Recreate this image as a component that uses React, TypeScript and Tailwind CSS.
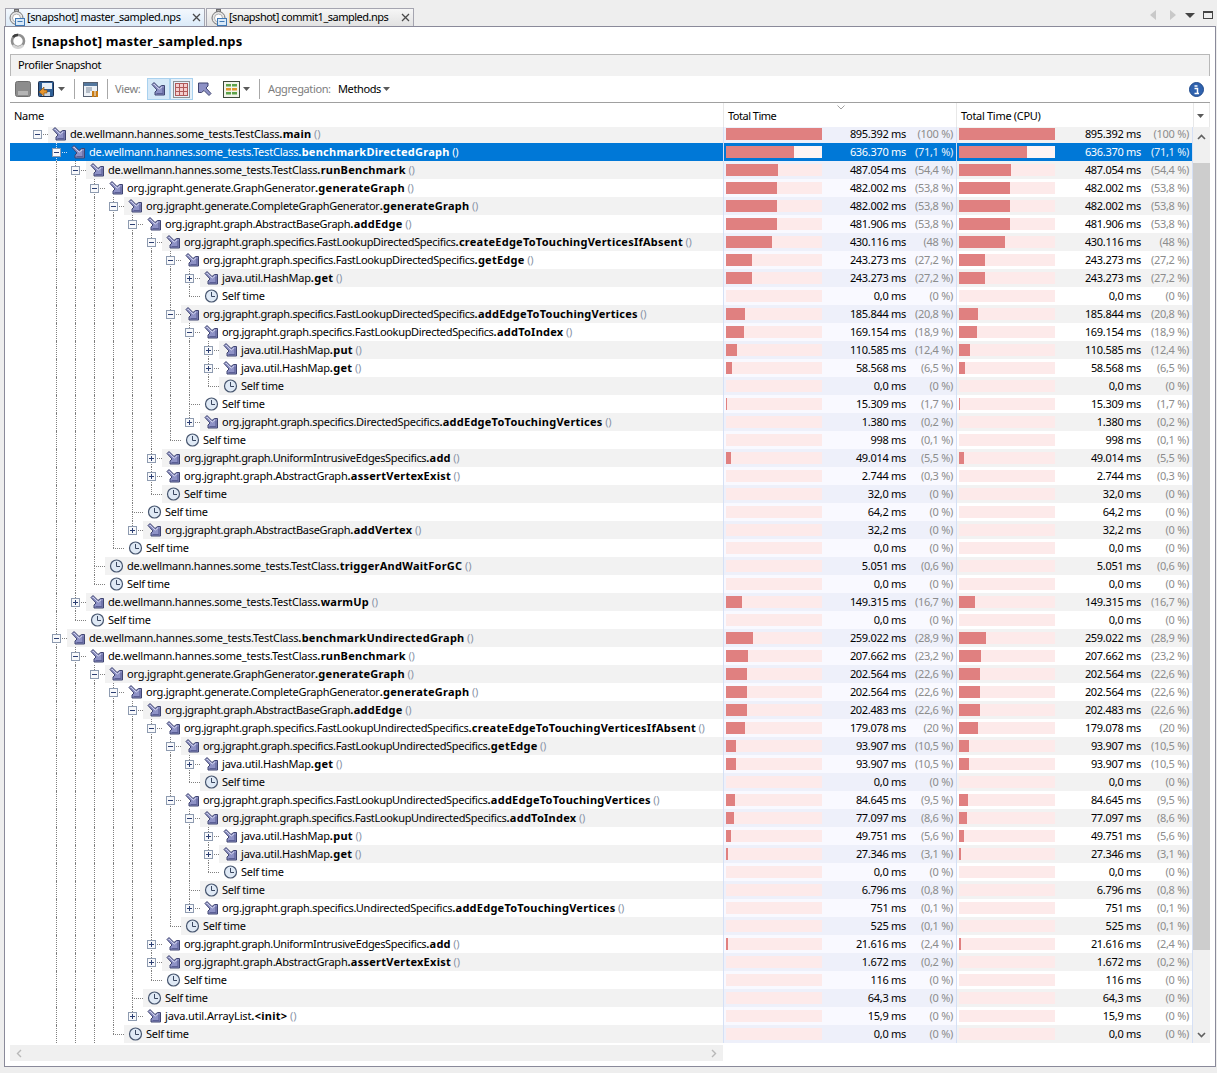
import React from 'react';

type Row = {
  depth: number;
  pkg: string;
  method?: string;
  time: string;
  pct: string;
  value: number;
  toggle?: '+' | '-';
  clock?: boolean;
  selected?: boolean;
};

const TC = 'de.wellmann.hannes.some_tests.TestClass';
const FD = 'org.jgrapht.graph.specifics.FastLookupDirectedSpecifics';
const FU = 'org.jgrapht.graph.specifics.FastLookupUndirectedSpecifics';
const GG = 'org.jgrapht.generate.GraphGenerator';
const CG = 'org.jgrapht.generate.CompleteGraphGenerator';
const AB = 'org.jgrapht.graph.AbstractBaseGraph';
const AG = 'org.jgrapht.graph.AbstractGraph';
const UI = 'org.jgrapht.graph.UniformIntrusiveEdgesSpecifics';
const HM = 'java.util.HashMap';
const AL = 'java.util.ArrayList';

// the reference font runs wider or narrower depending on the letters, so spacing goes per class
const tracking: Record<string, string> = {
  [TC]: 'tracking-[-0.22px]',
  [FD]: 'tracking-[-0.32px]',
  [FU]: 'tracking-[-0.32px]',
  [GG]: 'tracking-[-0.21px]',
  [AG]: 'tracking-[-0.21px]',
  [UI]: 'tracking-[-0.35px]',
  [HM]: 'tracking-[-0.21px]',
  [AL]: 'tracking-[-0.12px]',
};

const m = (depth: number, pkg: string, method: string, time: string, pct: string, toggle?: '+' | '-'): Row => ({
  depth,
  pkg,
  method,
  time: `${time} ms`,
  pct,
  value: parseFloat(pct.replace(',', '.')),
  toggle,
});

const self = (depth: number, time: string, pct = '0'): Row => ({
  depth,
  pkg: 'Self time',
  time: `${time} ms`,
  pct,
  value: parseFloat(pct.replace(',', '.')),
  clock: true,
});

const rows: Row[] = [
  m(0, TC, 'main', '895.392', '100', '-'),
  { ...m(1, TC, 'benchmarkDirectedGraph', '636.370', '71,1', '-'), selected: true },
  m(2, TC, 'runBenchmark', '487.054', '54,4', '-'),
  m(3, GG, 'generateGraph', '482.002', '53,8', '-'),
  m(4, CG, 'generateGraph', '482.002', '53,8', '-'),
  m(5, AB, 'addEdge', '481.906', '53,8', '-'),
  m(6, FD, 'createEdgeToTouchingVerticesIfAbsent', '430.116', '48', '-'),
  m(7, FD, 'getEdge', '243.273', '27,2', '-'),
  m(8, HM, 'get', '243.273', '27,2', '+'),
  self(8, '0,0'),
  m(7, FD, 'addEdgeToTouchingVertices', '185.844', '20,8', '-'),
  m(8, FD, 'addToIndex', '169.154', '18,9', '-'),
  m(9, HM, 'put', '110.585', '12,4', '+'),
  m(9, HM, 'get', '58.568', '6,5', '+'),
  self(9, '0,0'),
  self(8, '15.309', '1,7'),
  m(8, 'org.jgrapht.graph.specifics.DirectedSpecifics', 'addEdgeToTouchingVertices', '1.380', '0,2', '+'),
  self(7, '998', '0,1'),
  m(6, UI, 'add', '49.014', '5,5', '+'),
  m(6, AG, 'assertVertexExist', '2.744', '0,3', '+'),
  self(6, '32,0'),
  self(5, '64,2'),
  m(5, AB, 'addVertex', '32,2', '0', '+'),
  self(4, '0,0'),
  { ...m(3, TC, 'triggerAndWaitForGC', '5.051', '0,6'), clock: true },
  self(3, '0,0'),
  m(2, TC, 'warmUp', '149.315', '16,7', '+'),
  self(2, '0,0'),
  m(1, TC, 'benchmarkUndirectedGraph', '259.022', '28,9', '-'),
  m(2, TC, 'runBenchmark', '207.662', '23,2', '-'),
  m(3, GG, 'generateGraph', '202.564', '22,6', '-'),
  m(4, CG, 'generateGraph', '202.564', '22,6', '-'),
  m(5, AB, 'addEdge', '202.483', '22,6', '-'),
  m(6, FU, 'createEdgeToTouchingVerticesIfAbsent', '179.078', '20', '-'),
  m(7, FU, 'getEdge', '93.907', '10,5', '-'),
  m(8, HM, 'get', '93.907', '10,5', '+'),
  self(8, '0,0'),
  m(7, FU, 'addEdgeToTouchingVertices', '84.645', '9,5', '-'),
  m(8, FU, 'addToIndex', '77.097', '8,6', '-'),
  m(9, HM, 'put', '49.751', '5,6', '+'),
  m(9, HM, 'get', '27.346', '3,1', '+'),
  self(9, '0,0'),
  self(8, '6.796', '0,8'),
  m(8, 'org.jgrapht.graph.specifics.UndirectedSpecifics', 'addEdgeToTouchingVertices', '751', '0,1', '+'),
  self(7, '525', '0,1'),
  m(6, UI, 'add', '21.616', '2,4', '+'),
  m(6, AG, 'assertVertexExist', '1.672', '0,2', '+'),
  self(6, '116'),
  self(5, '64,3'),
  m(5, AL, '<init>', '15,9', '0', '+'),
  self(4, '0,0'),
];

// siblings that are scrolled out of view below the last row
const offscreen = [3, 2, 1];
const depths = [...rows.map((r) => r.depth), ...offscreen];

const hasLater = (i: number, level: number) => {
  for (let j = i + 1; j < depths.length; j++) {
    if (depths[j] < level) return false;
    if (depths[j] === level) return true;
  }
  return false;
};

const ARROW = 'M1 3.5 L3 1.5 L8 6.5 L10.5 4.5 L13.5 4.5 L13.5 14 L4 14 L4 11 L6 9 Z';

const MethodIcon = () => (
  <svg width="16" height="16" viewBox="0 0 16 16" className="shrink-0">
    <path d={ARROW} fill="#8e92c6" stroke="#3f4470" strokeWidth="1" strokeLinejoin="round" />
    <path d="M2.5 3.5 L3 3 L8.2 8.2 L11 6" fill="none" stroke="#cfd1ea" strokeWidth="1" />
    <path d="M5.5 12.5 H12 V6.5" fill="none" stroke="#5b5f96" strokeWidth="1.1" />
  </svg>
);

const ClockIcon = () => (
  <svg width="16" height="16" viewBox="0 0 16 16" className="shrink-0">
    <circle cx="7.5" cy="8" r="6" fill="#dfe9f5" stroke="#47566f" strokeWidth="1.2" />
    <path d="M7.5 4 V8.5 H11" fill="none" stroke="#3a4760" strokeWidth="1" />
  </svg>
);

const Handle = ({ sign }: { sign: '+' | '-' }) => (
  <svg width="9" height="9" viewBox="0 0 9 9" className="absolute -left-[4px] top-[5px]">
    <rect x="0.5" y="0.5" width="8" height="8" fill="#f8f9fb" stroke="#8e9bb0" />
    <path d={sign === '+' ? 'M2 4.5 H7 M4.5 2 V7' : 'M2 4.5 H7'} stroke="#2c3f73" />
  </svg>
);

const Bar = ({ value, selected }: { value: number; selected?: boolean }) => (
  <div className={`h-[12px] w-[96px] shrink-0 ${selected ? 'bg-[#fdf4f4]' : 'bg-[#fdeaea]'}`}>
    <div className="h-full bg-[#e08080]" style={{ width: `${Math.floor((value / 100) * 96)}px` }} />
  </div>
);

const TreeCell = ({ row, index }: { row: Row; index: number }) => {
  const dot = row.selected ? 'border-[#cfe3f7]' : 'border-[#808080]';
  return (
    <div className="flex h-full min-w-0 pl-[27px]">
      {Array.from({ length: row.depth }, (_, level) => (
        <div
          key={level}
          className={`h-full w-[19px] shrink-0 ${hasLater(index, level) ? `border-l border-dotted ${dot}` : ''}`}
        />
      ))}
      <div className="relative flex h-full w-[11px] shrink-0 flex-col">
        <div className={`h-[9px] ${row.depth > 0 ? `border-l border-dotted ${dot}` : ''}`} />
        <div
          className={`h-[9px] border-t border-dotted ${dot} ${
            hasLater(index, row.depth) ? 'border-l' : ''
          }`}
        />
        {row.toggle && <Handle sign={row.toggle} />}
      </div>
      <div
        className={`flex h-full flex-1 items-center gap-[2px] pl-[4px] ${
          !row.selected && index % 2 === 0 ? 'bg-[#f2f2f2]' : ''
        }`}
      >
        {row.clock ? <ClockIcon /> : <MethodIcon />}
        <span className={`whitespace-pre ${tracking[row.pkg] ?? 'tracking-[-0.27px]'}`}>
          {row.pkg}
          {row.method && <span className="font-bold tracking-[0.25px]">.{row.method}</span>}
          {row.method && <span className={row.selected ? 'text-white' : 'text-[#8a94a8]'}> ()</span>}
        </span>
      </div>
    </div>
  );
};

const TimeCell = ({ row, cpu, stripe }: { row: Row; cpu?: boolean; stripe: boolean }) => {
  let bg = stripe ? 'bg-[#eef0fa]' : 'bg-[#f9f9ff]';
  if (cpu) bg = stripe ? 'bg-[#f2f2f2]' : 'bg-white';
  if (row.selected) bg = 'bg-[#0078d7]';
  return (
    <div
      className={`flex h-full items-center border-l border-[#d5e0f5] pl-[2px] pr-[3px] ${bg} ${
        cpu ? 'border-r' : ''
      }`}
    >
      <Bar value={row.value} selected={row.selected} />
      <span className="flex-1 text-right">{row.time}</span>
      <span
        className={`text-right ${cpu ? 'w-[48px]' : 'w-[47px]'} ${
          row.selected ? 'text-[#e6f0fa]' : 'text-[#8c8c8c]'
        }`}
      >
        ({row.pct} %)
      </span>
    </div>
  );
};

const Caret = () => (
  <svg width="7" height="4" viewBox="0 0 7 4" className="shrink-0">
    <path d="M0 0 H7 L3.5 4 Z" fill="#5a5a5a" />
  </svg>
);

const Separator = () => <div className="h-[20px] w-px shrink-0 bg-[#a8a8a8]" />;

const TabIcon = () => (
  <svg width="16" height="18" viewBox="0 0 16 18" className="shrink-0">
    <rect x="5.5" y="0.5" width="4" height="2" fill="#a9a9a9" stroke="#6e6e6e" />
    <circle cx="7.5" cy="9" r="6.5" fill="#e6e6e6" stroke="#777" />
    <circle cx="7.5" cy="9" r="4" fill="#fff" stroke="#b0b0b0" />
    <rect x="6.5" y="9.5" width="9" height="7" fill="#d9e9f8" stroke="#3f78b5" />
    <path d="M8.5 12.5 H13.5" stroke="#3f78b5" />
  </svg>
);

const Tab = ({ label, active, box }: { label: string; active?: boolean; box: string }) => (
  <div
    className={`flex h-[18px] items-center border border-b-0 border-[#a5a5b0] ${box} ${
      active ? 'bg-gradient-to-b from-[#f3f8fd] to-[#dcebf9]' : 'bg-gradient-to-b from-[#f6f6f6] to-[#e2e2e2]'
    }`}
  >
    <TabIcon />
    <span
      className={`ml-[2px] -mt-[2px] flex-1 whitespace-pre ${active ? 'tracking-[-0.4px]' : 'tracking-[-0.5px]'}`}
    >
      {label}
    </span>
    <svg width="9" height="9" viewBox="0 0 9 9" className="mr-[3px] shrink-0">
      <path d="M1 1 L8 8 M8 1 L1 8" stroke="#4a4a4a" strokeWidth="1.3" />
    </svg>
  </div>
);

const TitleSpinner = () => (
  <svg width="16" height="16" viewBox="0 0 16 16" className="shrink-0">
    <circle cx="8" cy="8" r="6" fill="none" stroke="#8f8f8f" strokeWidth="2.6" />
    <path d="M3 12 A6 6 0 0 0 13 12" fill="none" stroke="#d4d4d4" strokeWidth="2.6" />
    <path d="M3 4 A6 6 0 0 1 8 2" fill="none" stroke="#3e3e3e" strokeWidth="2.6" />
  </svg>
);

export default function App() {
  return (
    <div className="flex h-[1073px] w-[1217px] flex-col overflow-hidden bg-[#eeeeee] font-['Noto_Sans',sans-serif] text-[11px] leading-[18px] tracking-[-0.3px] text-black">
      {/* tab strip */}
      <div className="flex h-[26px] shrink-0 items-end pl-[5px]">
        <Tab label="[snapshot] master_sampled.nps" active box="w-[200px] pl-[3px]" />
        <Tab label="[snapshot] commit1_sampled.nps" box="ml-[1px] w-[208px] pl-[4px]" />
        <div className="ml-auto mr-[4px] flex items-center self-start pt-[10px]">
          <svg width="7" height="10" viewBox="0 0 7 10" className="mr-[12px]">
            <path d="M6 0 V10 L0 5 Z" fill="#c8c8c8" />
          </svg>
          <svg width="7" height="10" viewBox="0 0 7 10" className="mr-[9px]">
            <path d="M1 0 V10 L7 5 Z" fill="#c8c8c8" />
          </svg>
          <svg width="10" height="5" viewBox="0 0 10 5" className="mr-[8px]">
            <path d="M0 0 H10 L5 5 Z" fill="#444" />
          </svg>
          <div className="h-[8px] w-[10px] border border-t-2 border-[#444]" />
        </div>
      </div>

      {/* main panel */}
      <div className="mb-[6px] ml-[4px] mr-[1px] flex min-h-0 flex-1 flex-col border border-[#8a8a9a] bg-white px-[5px]">
        <div className="flex h-[27px] shrink-0 items-center gap-[6px]">
          <TitleSpinner />
          <span className="text-[13px] font-bold tracking-[0.18px]">[snapshot] master_sampled.nps</span>
        </div>

        <div className="flex h-[22px] shrink-0 items-center border border-b-0 border-[#b8b8b8] bg-[#f2f2f2] pb-[2px] pl-[7px] tracking-[-0.35px]">
          Profiler Snapshot
        </div>

        {/* toolbar */}
        <div className="flex h-[27px] shrink-0 items-center border-b border-[#a0a0a0] pl-[5px] pr-[6px]">
          <svg width="16" height="16" viewBox="0 0 16 16" className="shrink-0">
            <rect x="0.5" y="0.5" width="15" height="15" rx="2" fill="#8d8d8d" stroke="#6f6f6f" />
            <rect x="3" y="10" width="10" height="4" fill="#b5b5b5" />
          </svg>
          <svg width="16" height="16" viewBox="0 0 16 16" className="ml-[7px] shrink-0">
            <rect x="0.5" y="0.5" width="15" height="15" rx="1" fill="#2f5f96" stroke="#1c2f4e" />
            <rect x="4" y="2" width="10" height="6" fill="#e6eef7" />
            <rect x="4" y="11" width="8" height="4" fill="#c9d3df" />
            <path d="M1 11 L6 6 V9 H9 V12 H6 V15 Z" fill="#e8952c" stroke="#7a4a10" strokeWidth="0.6" />
          </svg>
          <div className="ml-[4px]">
            <Caret />
          </div>
          <div className="ml-[9px]">
            <Separator />
          </div>
          <svg width="16" height="17" viewBox="0 0 16 17" className="ml-[8px] shrink-0">
            <rect x="0.5" y="1.5" width="14" height="14" fill="#eef2f7" stroke="#566070" />
            <rect x="1" y="2" width="13" height="3" fill="#54789f" />
            <path d="M3 7 H9 M3 9 H9 M3 11 H7" stroke="#7a8798" />
            <rect x="9" y="10" width="2.5" height="6" fill="#c97c14" />
            <rect x="12.5" y="10" width="2.5" height="6" fill="#c97c14" />
          </svg>
          <div className="ml-[8px]">
            <Separator />
          </div>
          <span className="ml-[7px] w-[32px] shrink-0 text-[#7d7d7d]">View:</span>
          <div className="flex h-[22px] w-[23px] items-center justify-center border border-[#a9d1ee] bg-[#d6e9f8]">
            <MethodIcon />
          </div>
          <div className="flex h-[22px] w-[23px] items-center justify-center border border-[#a9d1ee] bg-[#e6f1fa]">
            <svg width="17" height="17" viewBox="0 0 17 17">
              <rect x="0.5" y="0.5" width="16" height="16" fill="none" stroke="#333" strokeDasharray="1 1" />
              <rect x="2.5" y="2.5" width="12" height="12" fill="#f4cfcf" stroke="#b05a5a" />
              <path d="M2.5 6.5 H14.5 M2.5 10.5 H14.5 M6.5 2.5 V14.5 M10.5 2.5 V14.5" stroke="#b05a5a" />
            </svg>
          </div>
          <svg width="16" height="16" viewBox="0 0 16 16" className="ml-[3px] shrink-0 rotate-180">
            <path d={ARROW} fill="#8e92c6" stroke="#3f4470" strokeLinejoin="round" />
          </svg>
          <svg width="17" height="17" viewBox="0 0 17 17" className="ml-[11px] shrink-0">
            <rect x="0.5" y="0.5" width="16" height="16" fill="#f2f5ea" stroke="#3e4a3a" />
            <rect x="3" y="3" width="11" height="2.5" fill="#5da34a" />
            <rect x="3" y="7" width="11" height="2.5" fill="#e0962c" />
            <rect x="3" y="11" width="11" height="2.5" fill="#5da34a" />
            <path d="M8.5 2 V15" stroke="#f2f5ea" />
          </svg>
          <div className="ml-[3px]">
            <Caret />
          </div>
          <div className="ml-[9px]">
            <Separator />
          </div>
          <span className="ml-[8px] w-[70px] shrink-0 text-[#7d7d7d] tracking-[-0.38px]">Aggregation:</span>
          <span className="w-[45px] shrink-0 tracking-[-0.38px]">Methods</span>
          <Caret />
          <svg width="15" height="15" viewBox="0 0 15 15" className="ml-auto shrink-0">
            <circle cx="7.5" cy="7.5" r="7" fill="#2f62ae" stroke="#1f4a8c" />
            <path d="M5.5 4 H8.5 M5.5 6.5 H8.5 V11.5 M5.5 11.5 H10" stroke="#fff" strokeWidth="1.5" fill="none" />
          </svg>
        </div>

        {/* column headers */}
        <div className="grid h-[24px] shrink-0 grid-cols-[713px_233px_237px_17px] bg-white">
          <div className="flex items-center pl-[4px] pt-[2px]">Name</div>
          <div className="relative flex items-center border-l border-[#e8e8e8] pl-[4px] pt-[2px] tracking-[-0.5px]">
            Total Time
            <svg width="8" height="5" viewBox="0 0 8 5" className="absolute left-[113px] top-[2px]">
              <path d="M0.5 0.5 L4 4 L7.5 0.5" fill="none" stroke="#a0a0a0" />
            </svg>
          </div>
          <div className="flex items-center border-l border-[#e8e8e8] pl-[4px] pt-[2px]">Total Time (CPU)</div>
          <div className="flex items-center justify-center border-x border-[#e8e8e8] pr-[2px] pt-[2px]">
            <Caret />
          </div>
        </div>

        {/* table body */}
        <div className="flex h-[916px] shrink-0 overflow-hidden">
          <div className="w-[1183px] shrink-0">
            <div className="-mt-[2px]">
              {rows.map((row, i) => (
                <div
                  key={i}
                  className={`grid h-[18px] grid-cols-[713px_233px_237px] ${
                    row.selected ? 'bg-[#0078d7] text-white' : ''
                  }`}
                >
                  <TreeCell row={row} index={i} />
                  <TimeCell row={row} stripe={i % 2 === 0} />
                  <TimeCell row={row} cpu stripe={i % 2 === 0} />
                </div>
              ))}
            </div>
          </div>
          <div className="flex w-[17px] shrink-0 flex-col bg-[#f0f0f0]">
            <div className="flex h-[36px] shrink-0 items-start justify-center pt-[7px]">
              <svg width="9" height="6" viewBox="0 0 9 6">
                <path d="M1 5 L4.5 1.5 L8 5" fill="none" stroke="#606060" strokeWidth="1.6" />
              </svg>
            </div>
            <div className="h-[787px] shrink-0 bg-[#cdcdcd]" />
            <div className="flex flex-1 items-end justify-center pb-[5px]">
              <svg width="9" height="6" viewBox="0 0 9 6">
                <path d="M1 1 L4.5 4.5 L8 1" fill="none" stroke="#606060" strokeWidth="1.6" />
              </svg>
            </div>
          </div>
        </div>

        {/* horizontal scrollbar */}
        <div className="mt-[2px] flex h-[16px] w-[713px] shrink-0 items-center justify-between bg-[#f0f0f0] px-[6px]">
          <svg width="6" height="9" viewBox="0 0 6 9">
            <path d="M5 1 L1.5 4.5 L5 8" fill="none" stroke="#b8b8b8" strokeWidth="1.4" />
          </svg>
          <svg width="6" height="9" viewBox="0 0 6 9">
            <path d="M1 1 L4.5 4.5 L1 8" fill="none" stroke="#b8b8b8" strokeWidth="1.4" />
          </svg>
        </div>
      </div>
    </div>
  );
}
